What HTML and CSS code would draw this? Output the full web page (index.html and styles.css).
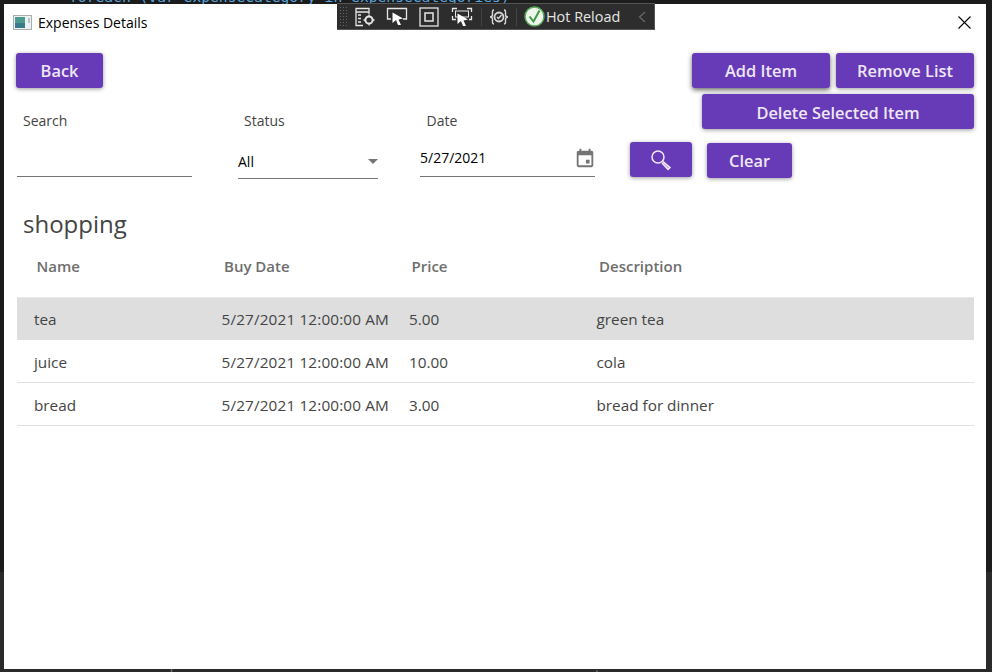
FILE: index.html
```html
<!DOCTYPE html>
<html lang="en">
<head>
    <meta charset="UTF-8">
    <meta name="viewport" content="width=device-width, initial-scale=1.0">
    <title>Expenses Details</title>
    <link rel="stylesheet" href="styles.css">
</head>
<body>
<div class="code-behind">foreach (var expenseCategory in expenseCategories)</div>
<div class="ide-panel">
    <span class="ide-word word-value">value</span>
    <span class="ide-word word-type">type</span>
</div>

<div class="debug-bar">
    <span class="grip"></span>
    <svg class="debug-icon" width="22" height="20" viewBox="0 0 22 20" fill="none" stroke="#e6e6e6" stroke-width="1.3">
        <path d="M15 7V1.500H2V18.500H9"/><path d="M2 5H15M4 8H7M4 11.500H7M4 15H7"/>
        <circle cx="15" cy="13" r="3.600" stroke-width="2"/><path d="M15 7.500V9.500M15 16.500V18.500M9.500 13H11.500M18.500 13H20.500"/>
    </svg>
    <svg class="debug-icon cursor-icon" width="22" height="20" viewBox="0 0 22 20" fill="none" stroke="#e6e6e6" stroke-width="1.3">
        <path d="M5 12H1.500V1.500H20.500V12H17"/><path d="M6.500 5.500L17 11.500L12.500 12.500L15 18H12L10 13L6.500 16Z" fill="#fff" stroke="none"/>
    </svg>
    <svg class="debug-icon square-icon" width="20" height="20" viewBox="0 0 20 20" fill="none" stroke="#e6e6e6" stroke-width="1.3">
        <rect x="1" y="1" width="18" height="18"/><rect x="6" y="6" width="8" height="8" stroke-width="1.500"/>
    </svg>
    <svg class="debug-icon" width="22" height="20" viewBox="0 0 22 20" fill="none" stroke="#e6e6e6" stroke-width="1.3">
        <path d="M1.500 5V1.500H6M16 1.500H20.500V5M20.500 9V12.500H18M1.500 9V12.500H5"/><rect x="4.500" y="4" width="13" height="6" stroke-width="1"/>
        <path d="M6.500 6.500L17 12.500L12.500 13.500L15 19H12L10 14L6.500 17Z" fill="#fff" stroke="none"/>
    </svg>
    <span class="debug-sep sep-first"></span>
    <svg class="debug-icon brace-icon" width="20" height="20" viewBox="0 0 20 20" fill="none" stroke="#d8d8d8" stroke-width="1.400">
        <path d="M5 3C3 3 3.500 5 3.500 7.500C3.500 9 2.500 10 1 10C2.500 10 3.500 11 3.500 12.500C3.500 15 3 17 5 17"/>
        <path d="M15 3C17 3 16.500 5 16.500 7.500C16.500 9 17.500 10 19 10C17.500 10 16.500 11 16.500 12.500C16.500 15 17 17 15 17"/>
        <circle cx="10" cy="10" r="4.500" stroke-width="1.800"/><path d="M8 10L9.500 11.500L12.500 8"/>
    </svg>
    <span class="debug-sep"></span>
    <svg class="hot-icon" width="21" height="21" viewBox="0 0 21 21">
        <circle cx="10.500" cy="10.500" r="9.500" fill="#eef5ea" stroke="#5aa85a" stroke-width="1.500"/>
        <path d="M5.500 10.500L9.500 15.500L15.500 4.500" fill="none" stroke="#3d9a46" stroke-width="2"/>
    </svg>
    <span class="hot-label">Hot Reload</span>
    <svg class="collapse-icon" width="8" height="12" viewBox="0 0 8 12" fill="none" stroke="#6a6a6a" stroke-width="1.200"><path d="M7 1L1.500 6L7 11"/></svg>
</div>

<main class="window">
    <header class="title-bar">
        <svg class="app-icon" width="19" height="15" viewBox="0 0 19 15">
            <rect x="0.500" y="0.500" width="18" height="14" fill="#eef1f2" stroke="#a9adb0"/>
            <rect x="2" y="2" width="10" height="11" fill="#4d9a8e"/>
            <rect x="2" y="8" width="10" height="5" fill="#3a7a8c"/>
            <rect x="15" y="3" width="2" height="5" fill="#b7c4c8"/>
        </svg>
        <span class="title-text">Expenses Details</span>
        <svg class="close-icon" width="13" height="13" viewBox="0 0 13 13" stroke="#000" stroke-width="1.100"><path d="M0.500 0.500L12.500 12.500M12.500 0.500L0.500 12.500"/></svg>
    </header>

    <section class="content">
        <div class="actions">
            <button class="btn btn-back">Back</button>
            <div class="actions-right">
                <div class="actions-line">
                    <button class="btn btn-add">Add Item</button>
                    <button class="btn btn-remove">Remove List</button>
                </div>
                <button class="btn btn-delete">Delete Selected Item</button>
            </div>
        </div>

        <div class="filters">
            <div class="field field-search">
                <label>Search</label>
                <div class="control"></div>
            </div>
            <div class="field field-status">
                <label>Status</label>
                <div class="control"><span>All</span><i class="caret"></i></div>
            </div>
            <div class="field field-date">
                <label>Date</label>
                <div class="control">
                    <span>5/27/2021</span>
                    <svg class="calendar-icon" width="22" height="22" viewBox="0 0 24 24" fill="#757575"><path d="M19 4h-1V2h-2v2H8V2H6v2H5c-1.100 0-2 .9-2 2v14c0 1.100.9 2 2 2h14c1.100 0 2-.9 2-2V6c0-1.100-.9-2-2-2zm0 16H5V9h14v11zm-6-6h4v4h-4z"/></svg>
                </div>
            </div>
            <button class="btn btn-search">
                <svg width="22" height="22" viewBox="0 0 22 22" fill="none" stroke="#f1eaf9" stroke-width="1.500">
                    <circle cx="8" cy="8" r="6"/>
                    <path d="M13 12.500L20 18.500L18 20.500L12 14" fill="#b9a3dd"/>
                </svg>
            </button>
            <button class="btn btn-clear">Clear</button>
        </div>

        <h2 class="list-name">shopping</h2>

        <div class="table-head">
            <span>Name</span><span>Buy Date</span><span>Price</span><span>Description</span>
        </div>
        <div class="table-row selected">
            <span>tea</span><span class="date">5/27/2021 12:00:00 AM</span><span>5.00</span><span>green tea</span>
        </div>
        <div class="table-row">
            <span>juice</span><span class="date">5/27/2021 12:00:00 AM</span><span>10.00</span><span>cola</span>
        </div>
        <div class="table-row">
            <span>bread</span><span class="date">5/27/2021 12:00:00 AM</span><span>3.00</span><span>bread for dinner</span>
        </div>
    </section>
</main>
</body>
</html>
```

FILE: styles.css
```css
html, body {
    height: 100%;
}

body {
    background-color: #1c1c1c;
    color: #444;
    font-family: "Open Sans", "Noto Sans", sans-serif;
    margin: 0;
    padding: 4px 6px 3px 4px;
    box-sizing: border-box;
    overflow: hidden;
}

.code-behind {
    position: absolute;
    top: -13px;
    left: 69px;
    color: #5aa5dc;
    font-family: "DejaVu Sans Mono", monospace;
    font-size: 14.650px;
    line-height: 20px;
    white-space: nowrap;
}

.ide-panel {
    position: absolute;
    top: 572px;
    left: 0;
    right: 0;
    bottom: 0;
    background-color: #2a2a2a;
    overflow: hidden;
}

.ide-word {
    position: absolute;
    top: 95px;
    color: #777;
    font-size: 14px;
    line-height: 16px;
}

.word-value {
    left: 155px;
}

.word-type {
    left: 595px;
}

.debug-bar {
    position: absolute;
    z-index: 2;
    top: 3px;
    left: 337px;
    width: 318px;
    height: 27px;
    box-sizing: border-box;
    background-color: #2d2d2d;
    border: 1px solid #555;
    border-left: none;
    display: flex;
    align-items: center;
    color: #e6e6e6;
}

.grip {
    width: 9px;
    height: 22px;
    margin-left: 2px;
    margin-right: 6px;
    background-image: radial-gradient(#666 0.7px, transparent 0.8px);
    background-size: 3px 3px;
}

.debug-icon {
    margin-right: 10px;
    flex: none;
}

.cursor-icon {
    margin-right: 11px;
}

.square-icon {
    margin-right: 12px;
}

.brace-icon {
    margin-right: 8px;
}

.debug-sep {
    width: 1px;
    height: 18px;
    background-color: #444;
    margin-right: 7px;
    margin-left: -1px;
}

.sep-first {
    margin-left: -2px;
    margin-right: 7px;
}

.hot-icon {
    flex: none;
    margin-right: 1px;
}

.hot-label {
    font-size: 14.400px;
    white-space: nowrap;
}

.collapse-icon {
    margin-left: 18px;
}

.window {
    background-color: #fff;
    height: 100%;
    position: relative;
}

.title-bar {
    display: flex;
    align-items: center;
    height: 37px;
    padding: 0 15px 0 9px;
}

.app-icon {
    margin-right: 6px;
}

.title-text {
    color: #000;
    font-size: 14px;
    flex: 1;
}

.content {
    padding: 12px 12px 0 12px;
}

.btn {
    background-color: #673ab7;
    color: #ede7f6;
    border: none;
    border-radius: 3px;
    height: 35px;
    padding: 0;
    font-family: inherit;
    font-size: 16.400px;
    font-weight: 600;
    box-shadow: 0 1px 4px rgba(0, 0, 0, 0.4);
}

.actions {
    display: flex;
    justify-content: space-between;
    align-items: flex-start;
}

.actions-right {
    display: flex;
    flex-direction: column;
    align-items: flex-end;
    gap: 6px;
}

.actions-line {
    display: flex;
    gap: 6px;
}

.btn-back {
    width: 87px;
}

.btn-add {
    width: 138px;
    box-shadow: 0 2px 5px rgba(0, 0, 0, 0.6);
}

.btn-remove {
    width: 138px;
}

.btn-delete {
    width: 272px;
    padding-top: 1px;
}

.filters {
    display: flex;
    align-items: flex-start;
    margin-top: -18px;
    margin-left: 1px;
}

.field {
    flex: none;
}

.field label {
    display: block;
    font-size: 14px;
    line-height: 20px;
    height: 32px;
    padding-left: 6px;
    color: #444;
}

.control {
    display: flex;
    align-items: center;
    justify-content: space-between;
    box-sizing: border-box;
    border-bottom: 1px solid #757575;
    color: #000;
    font-size: 14px;
    padding-bottom: 4px;
}

.field-search {
    width: 175px;
    margin-right: 46px;
}

.field-search .control {
    height: 34px;
}

.field-status {
    width: 140px;
    margin-right: 42px;
}

.field-status .control {
    height: 36px;
    padding-top: 6px;
}

.field-date {
    width: 175px;
    margin-right: 35px;
}

.field-date label {
    padding-left: 6.500px;
}

.field-date .control {
    height: 34px;
}

.calendar-icon {
    margin-right: -1px;
}

.caret {
    width: 0;
    height: 0;
    border-left: 5px solid transparent;
    border-right: 5px solid transparent;
    border-top: 5px solid #757575;
}

.btn-search {
    width: 62px;
    margin-top: 31px;
    margin-right: 15px;
}

.btn-search svg {
    display: block;
    margin: 0 auto;
}

.btn-clear {
    width: 85px;
    margin-top: 32px;
}

.list-name {
    font-size: 24px;
    font-weight: 400;
    line-height: 34px;
    margin: 28px 0 0 7px;
    color: #444;
}

.table-head, .table-row {
    display: grid;
    grid-template-columns: repeat(4, 187.500px);
    margin-left: 1px;
}

.table-head {
    height: 56px;
    padding: 15px 0 0 19.500px;
    box-sizing: border-box;
    font-size: 15px;
    font-weight: 600;
    color: #6e6e6e;
}

.table-row {
    height: 43px;
    align-items: center;
    padding: 1px 0 0 17px;
    box-sizing: border-box;
    font-size: 15.300px;
    border-bottom: 1px solid #e0e0e0;
    white-space: nowrap;
}

.table-row.selected {
    background-color: #dedede;
    border-top: 1px solid #e8e8e8;
    padding-top: 0;
}

.date {
    letter-spacing: 0.15px;
}
```
